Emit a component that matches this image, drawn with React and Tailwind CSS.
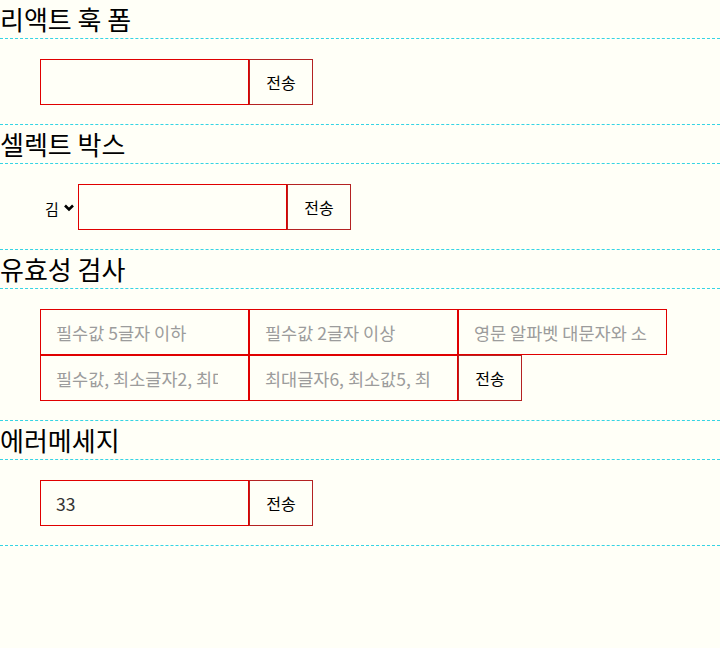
import { useState } from "react";

const Title = ({ children }) => (
  <h1 className="h-[39px] text-[26px] leading-[37px] border-b border-dashed border-[#35d4e4]">
    {children}
  </h1>
);

const Row = ({ children }) => (
  <div className="flex flex-wrap items-center pl-10 pt-5 pb-[19px] border-b border-dashed border-[#35d4e4]">
    {children}
  </div>
);

const Field = ({ placeholder, value, wide }) => (
  <input
    type="text"
    placeholder={placeholder}
    defaultValue={value}
    className={
      "w-[209px] h-[46px] shrink-0 border border-[#e00000] bg-transparent pl-[15px] text-[17.5px] text-[#333] placeholder:text-[#9c9c9c] outline-none " +
      (wide ? "pr-[30px]" : "pr-[10px]")
    }
  />
);

const Send = () => (
  <button
    type="button"
    className="w-[64px] h-[46px] shrink-0 border border-[#b42222] bg-transparent text-[16px] text-black"
  >
    전송
  </button>
);

export default function App() {
  const [name, setName] = useState("김");

  return (
    <div
      className="min-h-[648px] bg-[#fffff7] text-black"
      style={{ fontFamily: '"Noto Sans CJK KR", "Noto Sans", sans-serif' }}
    >
      <Title>리액트 훅 폼</Title>
      <Row>
        <Field />
        <Send />
      </Row>

      <Title>셀렉트 박스</Title>
      <Row>
        <div className="relative w-[38px] h-[22px]">
          <select
            value={name}
            onChange={(e) => setName(e.target.value)}
            className="appearance-none w-full h-full bg-transparent pl-[5px] text-[15px] leading-[22px] outline-none"
          >
            <option>김</option>
            <option>이</option>
            <option>박</option>
          </select>
          <svg
            className="absolute left-[24px] top-[8px] pointer-events-none"
            width="10"
            height="8"
            viewBox="0 0 10 8"
          >
            <path d="M1 1.5 L5 5.5 L9 1.5" fill="none" stroke="#000" strokeWidth="2.6" />
          </svg>
        </div>
        <Field />
        <Send />
      </Row>

      <Title>유효성 검사</Title>
      <Row>
        <Field placeholder="필수값 5글자 이하" />
        <Field placeholder="필수값 2글자 이상" />
        <Field placeholder="영문 알파벳 대문자와 소" />
        <Field placeholder="필수값, 최소글자2, 최대글자5" wide />
        <Field placeholder="최대글자6, 최소값5, 최" />
        <Send />
      </Row>

      <Title>에러메세지</Title>
      <Row>
        <Field value="33" />
        <Send />
      </Row>
    </div>
  );
}
